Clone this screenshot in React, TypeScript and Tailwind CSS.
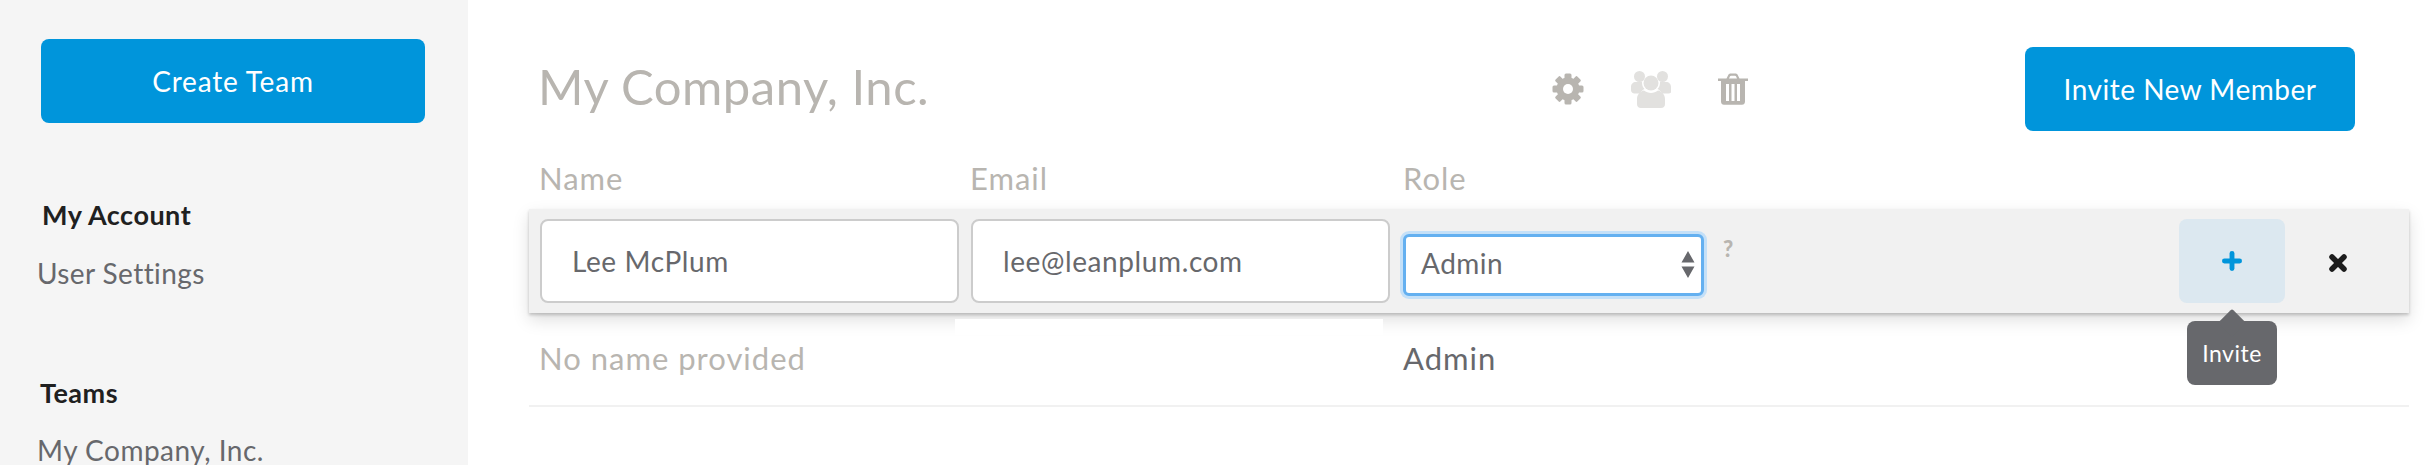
import React from 'react';
import { Plus, X } from 'lucide-react';

const font = { fontFamily: 'Lato, "Open Sans", sans-serif' };

// --- Icons ---
const GearIcon = () => (
    <svg width="32" height="32" viewBox="0 0 32 32" className="shrink-0">
        {[0, 45, 90, 135].map((deg) => (
            <rect key={deg} x="12.5" y="0.5" width="7" height="31" rx="1.5" fill="#b8b5b0" transform={`rotate(${deg} 16 16)`} />
        ))}
        <circle cx="16" cy="16" r="11.5" fill="#b8b5b0" />
        <circle cx="16" cy="16" r="5" fill="#ffffff" />
    </svg>
);

const PeopleIcon = () => (
    <svg width="40" height="37" viewBox="0 0 40 37" className="shrink-0">
        <circle cx="8.5" cy="5.5" r="5.5" fill="#e2e1df" />
        <circle cx="31.5" cy="5.5" r="5.5" fill="#e2e1df" />
        <path d="M0 16c0-3 2-5 5-5h6c0 3 .5 5 2.500 7-2 1-3.500 2.500-4.500 4.500H3.500C1.500 22.500 0 21 0 19z" fill="#e2e1df" />
        <path d="M40 16c0-3-2-5-5-5h-6c0 3-.5 5-2.500 7 2 1 3.500 2.500 4.500 4.500h6.500c2 0 3.500-1.500 3.500-3.500z" fill="#e2e1df" />
        <circle cx="20" cy="12" r="7.500" fill="#e2e1df" />
        <path d="M6 28c0-4.500 3.500-8 7-8.500 2 1.500 4.500 2.500 7 2.500s5-1 7-2.500c3.500.5 7 4 7 8.500v5c0 2.500-1.500 4-4 4H10c-2.500 0-4-1.500-4-4z" fill="#e2e1df" />
    </svg>
);

const TrashIcon = () => (
    <svg width="30" height="32" viewBox="0 0 30 32" className="shrink-0">
        <path d="M0 5.500h8.500L10 2.500C10.500 1 11.500.5 13 .5h4c1.500 0 2.500.5 3 2l1.500 3H30V8H0z M11 5.500h8l-1-2.200c-.2-.4-.5-.6-1-.6h-4c-.5 0-.8.2-1 .6z" fill="#b8b5b0" fillRule="evenodd" />
        <path d="M3 8h24v20.500c0 2-1.200 3.300-3 3.300H6c-1.800 0-3-1.300-3-3.300z M8 11v17h3V11z M13.500 11v17h3V11z M19 11v17h3V11z" fill="#b8b5b0" fillRule="evenodd" />
    </svg>
);

const Field = ({ children }: { children: React.ReactNode }) => (
    <div className="flex h-[84px] w-[419px] items-center rounded-[8px] border-2 border-[#cccccc] bg-white pb-[1px] pl-[30px] text-[28px] tracking-[0.6px] text-[#67686c]">
        {children}
    </div>
);

export default function App() {
    return (
        <div className="flex h-[465px] w-[2429px] overflow-hidden bg-white" style={font}>
            {/* Sidebar */}
            <aside className="flex w-[468px] shrink-0 flex-col bg-[#f5f5f5] pt-[39px]">
                <button className="ml-[41px] flex h-[84px] w-[384px] shrink-0 items-center justify-center rounded-[8px] bg-[#0095db] text-[28px] tracking-[0.8px] text-white">
                    Create Team
                </button>
                <h3 className="mt-[74px] ml-[42px] shrink-0 text-[27px] leading-[36px] font-bold tracking-[0.5px] text-[#202020]">My Account</h3>
                <a className="mt-[22px] ml-[37px] shrink-0 text-[28px] leading-[36px] tracking-[0.4px] text-[#67686c]">User Settings</a>
                <h3 className="mt-[84px] ml-[40px] shrink-0 text-[27px] leading-[36px] font-bold tracking-[0.5px] text-[#202020]">Teams</h3>
                <a className="mt-[21px] ml-[37px] shrink-0 text-[28px] leading-[36px] tracking-[0.5px] text-[#67686c]">My Company, Inc.</a>
            </aside>

            {/* Main */}
            <main className="flex-1 pt-[47px] pr-[20px] pl-[61px]">
                {/* Header */}
                <div className="flex h-[84px] items-center">
                    <h1 className="w-[1023px] shrink-0 pb-[4px] pl-[9px] text-[49px] font-normal tracking-[0.5px] text-[#b8b5b0]">My Company, Inc.</h1>
                    <GearIcon />
                    <div className="ml-[47px]"><PeopleIcon /></div>
                    <div className="ml-[47px]"><TrashIcon /></div>
                    <button className="ml-auto mr-[54px] flex h-[84px] w-[330px] items-center justify-center rounded-[8px] bg-[#0095db] text-[28px] tracking-[0.5px] text-white">
                        Invite New Member
                    </button>
                </div>

                {/* Column labels */}
                <div className="grid h-[78px] grid-cols-[431px_433px_1fr] items-end px-[10px] pb-[13px] text-[31px] leading-[36px] tracking-[1px] text-[#b8b5b0]">
                    <span>Name</span>
                    <span>Email</span>
                    <span>Role</span>
                </div>

                {/* Invite row */}
                <div className="relative flex h-[104px] items-center bg-[#f1f1f1] pl-[11px] shadow-[0_2px_3px_rgba(0,0,0,0.2),0_7px_16px_rgba(0,0,0,0.13)]">
                    <Field>Lee McPlum</Field>
                    <div className="ml-[12px]"><Field>lee@leanplum.com</Field></div>
                    <div className="mt-[7px] ml-[13px] flex h-[62px] w-[301px] items-center justify-between rounded-[6px] border-[3px] border-[#64b0f0] bg-white pr-[6px] pb-[4px] pl-[15px] text-[28px] tracking-[0.5px] text-[#67686c] shadow-[0_0_0_3px_#c4e0f8]">
                        <span>Admin</span>
                        <svg width="14" height="27" viewBox="0 0 14 27" className="mt-[4px]">
                            <path d="M7 0l6.500 11.500H.5z M7 27L.5 15.500h13z" fill="#67686c" />
                        </svg>
                    </div>
                    <span className="mt-[-26px] ml-[19px] text-[22px] font-black text-[#b8b5b0]">?</span>
                    <div className="ml-auto mr-[18px] flex items-center">
                        <button className="flex h-[84px] w-[106px] items-center justify-center rounded-[8px] bg-[#dce8f0] text-[#0095db]">
                            <Plus size={26} strokeWidth={4.5} />
                        </button>
                        <div className="flex w-[106px] items-center justify-center pt-[4px] text-[#1c1c1c]">
                            <X size={24} strokeWidth={5.500} />
                        </div>
                    </div>

                    {/* Shadow cut-out under the email cell */}
                    <div className="absolute top-[110px] left-[426px] h-[16px] w-[428px] bg-white" />

                    {/* Tooltip */}
                    <div className="absolute top-[112px] right-[132px] flex h-[64px] w-[90px] items-center justify-center rounded-[8px] bg-[#67686c] text-[23px] tracking-[0.5px] text-white">
                        <span className="absolute top-[-8px] left-[35px] h-[20px] w-[20px] rotate-45 rounded-[2px] bg-[#67686c]" />
                        <span className="relative">Invite</span>
                    </div>
                </div>

                {/* Existing member */}
                <div className="grid h-[94px] grid-cols-[431px_433px_1fr] items-center border-b-2 border-[#f1f1f1] px-[10px] pb-[1px] text-[31px] tracking-[1px]">
                    <span className="text-[#b8b5b0]">No name provided</span>
                    <span />
                    <span className="text-[#67686c]">Admin</span>
                </div>
            </main>
        </div>
    );
}
